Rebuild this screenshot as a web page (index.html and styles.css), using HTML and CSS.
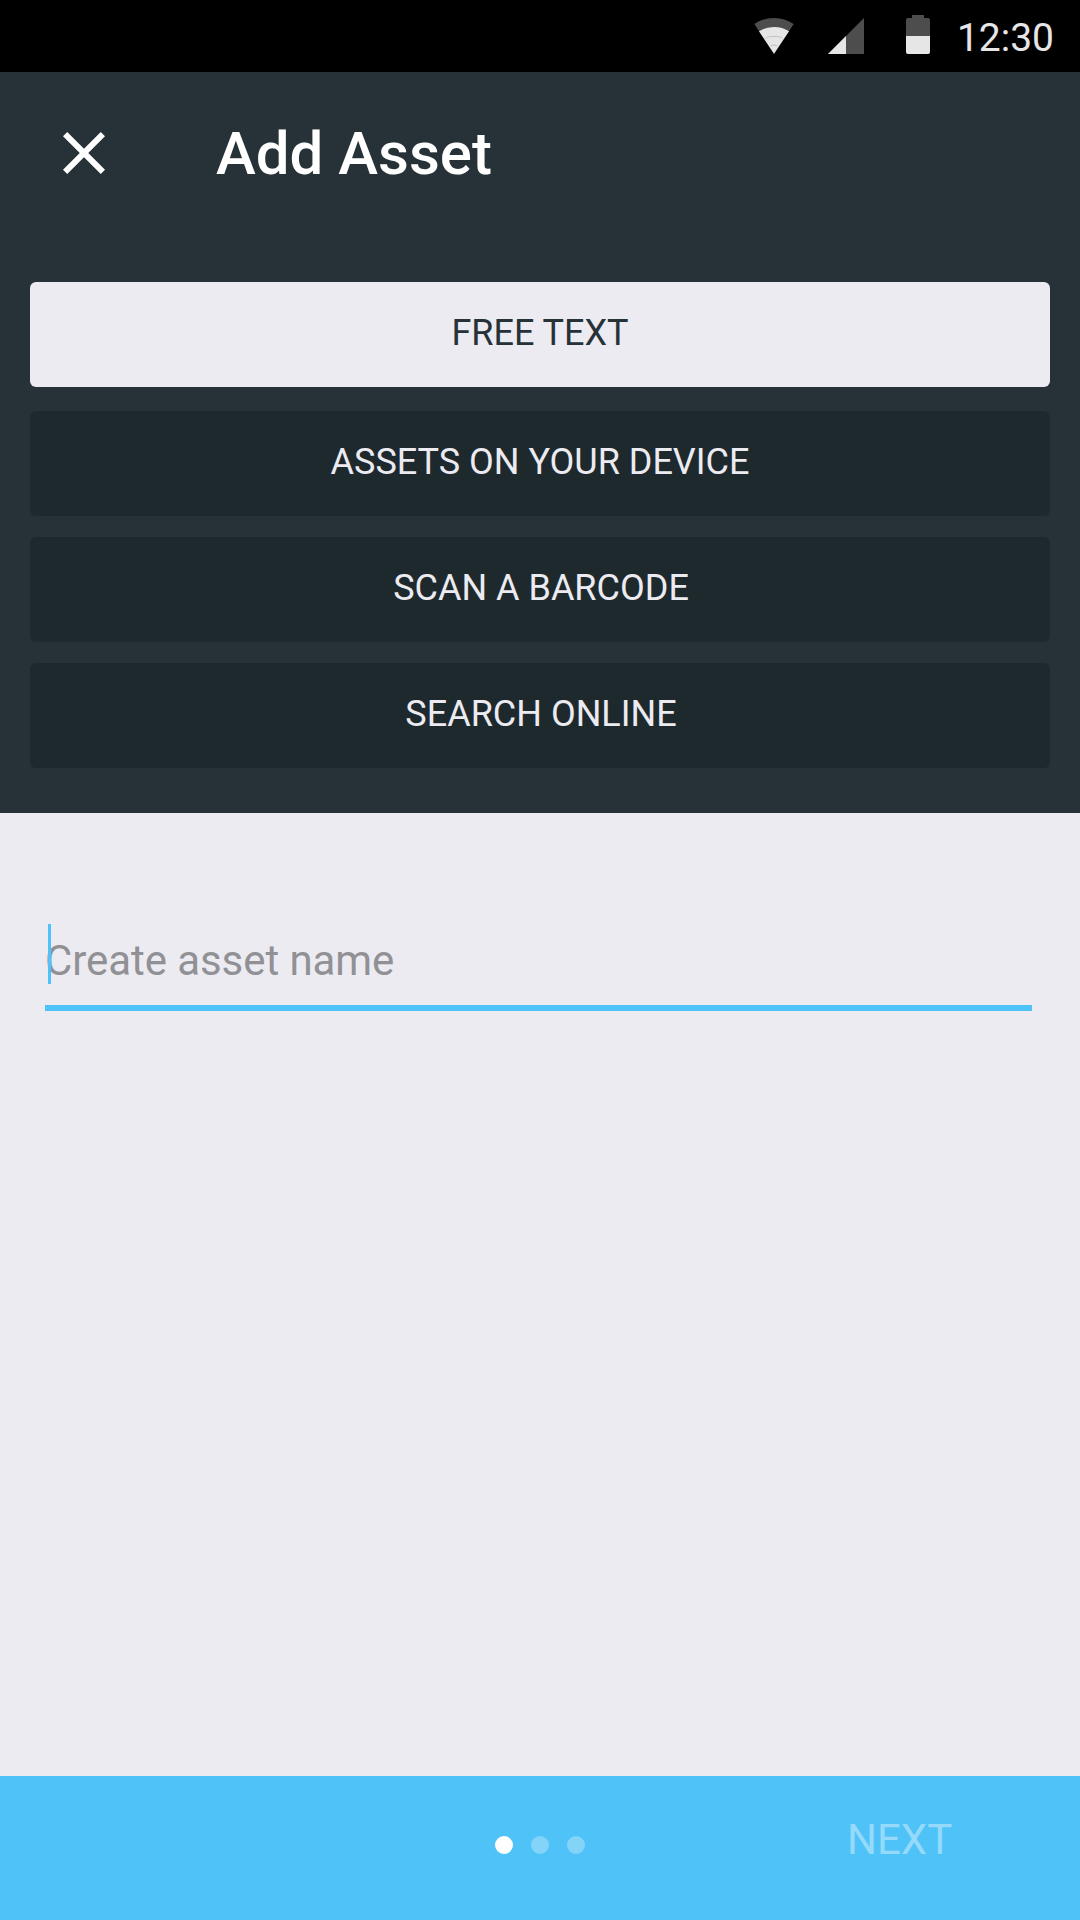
FILE: index.html
```html
<!DOCTYPE html>
<html lang="en">
<head>
<meta charset="utf-8">
<title>Add Asset</title>
<link rel="stylesheet" href="styles.css">
</head>
<body>
<div class="screen">
  <div class="status-bar">
    <svg class="status-icon wifi" width="40" height="36" viewBox="0 0 40 36">
      <path fill="#4d4d4d" d="M20 36 0.3 6Q9 0 20 0T39.7 6z"/>
      <path fill="#e6e6e6" d="M20 35.8 5 13.3Q11.500 9 20 9T35 13.300z"/>
      <path fill="none" stroke="#b8b8b8" stroke-width=".8" d="M11.500 20.500Q13 18.400 20 18.400T28.500 20.500M16.500 27.700Q17.500 27.200 20 27.200T23.500 27.700"/>
    </svg>
    <svg class="status-icon signal" width="36" height="36" viewBox="0 0 36 36">
      <path fill="#4d4d4d" d="M36 0V36H0z"/>
      <path fill="#e6e6e6" d="M0 36 18 18V36z"/>
    </svg>
    <svg class="status-icon battery" width="24" height="39" viewBox="0 0 24 39">
      <path fill="#4d4d4d" d="M0 21V5Q0 3 2 3H6V0H18V3H22Q24 3 24 5V21z"/>
      <path fill="#e6e6e6" d="M0 21H24V37Q24 39 22 39H2Q0 39 0 37z"/>
    </svg>
    <span class="clock">12:30</span>
  </div>
  <header class="header">
    <div class="toolbar">
      <svg class="close" width="72" height="72" viewBox="0 0 24 24">
        <path fill="#fff" d="M19 6.41 17.590 5 12 10.590 6.410 5 5 6.410 10.590 12 5 17.590 6.410 19 12 13.410 17.590 19 19 17.590 13.410 12z"/>
      </svg>
      <h1 class="title">Add Asset</h1>
    </div>
    <nav class="options">
      <button class="option selected">FREE TEXT</button>
      <button class="option">ASSETS ON YOUR DEVICE</button>
      <button class="option nudged">SCAN A BARCODE</button>
      <button class="option nudged">SEARCH ONLINE</button>
    </nav>
  </header>
  <main class="content">
    <div class="field">
      <span class="placeholder">Create asset name</span>
      <span class="caret"></span>
    </div>
  </main>
  <footer class="footer">
    <div class="dots">
      <span class="dot active"></span>
      <span class="dot"></span>
      <span class="dot"></span>
    </div>
    <span class="next">NEXT</span>
  </footer>
</div>
</body>
</html>
```
FILE: styles.css
```css
* { box-sizing: border-box; }
body { margin: 0; font-family: Roboto, sans-serif; }
.screen {
  display: flex;
  flex-direction: column;
  width: 1080px;
  height: 1920px;
  background: #ebebf1;
}
.status-bar {
  display: flex;
  justify-content: flex-end;
  height: 72px;
  padding-right: 26px;
  background: #000;
}
.status-icon { display: block; flex: none; }
.wifi { margin-top: 18px; margin-right: 34px; }
.signal { margin-top: 18px; margin-right: 42px; }
.battery { margin-top: 15px; }
.clock {
  width: 124px;
  padding-top: 15px;
  text-align: right;
  font-size: 39px;
  line-height: 46px;
  color: #e6e6e6;
}
.header {
  height: 741px;
  background: #273238;
}
.toolbar {
  display: flex;
  align-items: center;
  gap: 96px;
  height: 162px;
  padding-left: 48px;
}
.title {
  margin: 0;
  padding-top: 2px;
  font-size: 60px;
  font-weight: 500;
  line-height: 72px;
  color: #fff;
}
.options {
  display: flex;
  flex-direction: column;
  gap: 21px;
  padding: 48px 30px 0;
}
.option {
  height: 105px;
  padding: 0 0 4px;
  border: 0;
  border-radius: 6px;
  background: #1e292d;
  font-family: inherit;
  font-size: 36px;
  color: #ebebf1;
}
.option.nudged { padding-left: 2px; }
.option.selected {
  margin-bottom: 3px;
  background: #ebebf1;
  color: #273238;
}
.content {
  flex: 1;
  padding: 111px 48px 0 45px;
}
.field {
  position: relative;
  height: 87px;
  padding-top: 12px;
  border-bottom: 6px solid #4fc2f8;
}
.placeholder {
  display: block;
  font-size: 42px;
  line-height: 50px;
  letter-spacing: -0.07px;
  color: #919195;
}
.caret {
  position: absolute;
  left: 3px;
  top: 0;
  width: 3px;
  height: 60px;
  background: #4fc2f8;
}
.footer {
  display: grid;
  grid-template-columns: 1fr 90px 1fr;
  height: 144px;
  background: #4fc2f8;
}
.dots {
  grid-column: 2;
  display: flex;
  gap: 18px;
  padding-top: 60px;
}
.dot {
  width: 18px;
  height: 18px;
  border-radius: 50%;
  background: #84d4fa;
}
.dot.active { background: #fff; }
.next {
  padding: 39px 0 0 262px;
  font-size: 42px;
  line-height: 50px;
  color: #95dafb;
}
```
